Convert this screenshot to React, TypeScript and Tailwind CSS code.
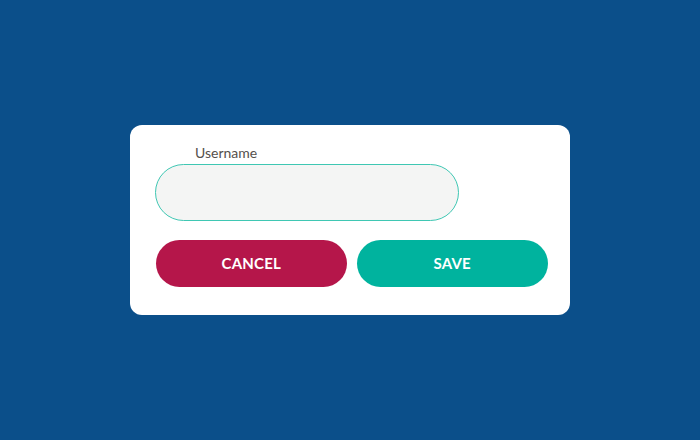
import React from 'react'

export default function App() {
  return (
    <div
      className="w-[700px] h-[440px] bg-[#0b4f8a] flex items-center justify-center"
      style={{ fontFamily: 'Lato, "Open Sans", sans-serif' }}
    >
      <div className="w-[440px] h-[190px] bg-white rounded-[12px] pl-[25px] pr-[22px] pt-[20px] flex flex-col">
        <label className="pl-[40px] text-[14px] leading-[16px] text-[#55504c]">Username</label>
        <input
          type="text"
          className="mt-[3px] w-[304px] h-[57px] rounded-full border-[1.5px] border-[#3fc7b3] bg-[#f4f5f4] outline-none px-5"
        />
        <div className="mt-[19px] pl-px flex gap-[10px]">
          <button className="w-[191px] h-[47px] rounded-full bg-[#b5164a] text-white font-bold text-[15px] tracking-[0.2px]">
            CANCEL
          </button>
          <button className="w-[192px] h-[47px] rounded-full bg-[#00b39e] text-white font-bold text-[15px] tracking-[0.2px]">
            SAVE
          </button>
        </div>
      </div>
    </div>
  )
}
